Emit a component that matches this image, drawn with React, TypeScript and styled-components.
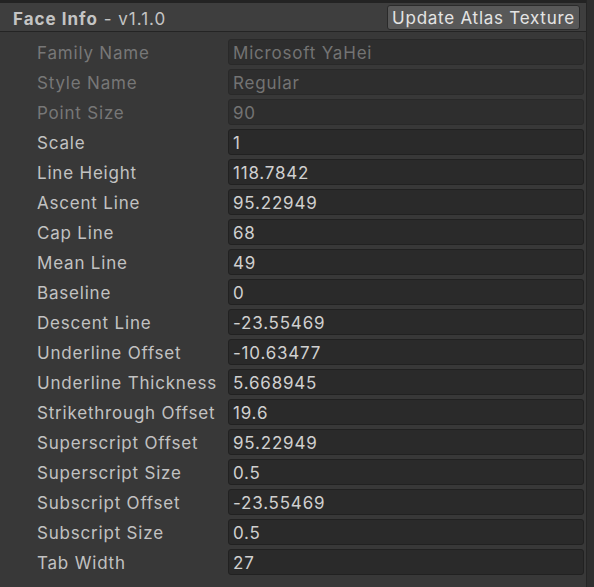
import React from "react";
import styled, { createGlobalStyle } from "styled-components";

const Global = createGlobalStyle`
  html, body { margin: 0; padding: 0; background: #383838; }
  body { font-family: Inter, "Noto Sans", sans-serif; }
`;

const Page = styled.div`
  width: 594px;
  height: 587px;
  display: flex;
  background: #383838;
  overflow: hidden;
`;

const Main = styled.div`
  width: 586px;
  display: flex;
  flex-direction: column;
`;

const Side = styled.div`
  width: 8px;
  border-left: 1px solid #252525;
  background: #2e2e2e;
  box-sizing: border-box;
`;

const TopStrip = styled.div`
  height: 3px;
  background: #232323;
`;

const Header = styled.div`
  height: 28px;
  background: #3e3e3e;
  border-bottom: 1px solid #242424;
  display: flex;
  align-items: center;
  justify-content: space-between;
  padding: 0 6px 0 13px;
`;

const Title = styled.div`
  font-size: 17px;
  color: #c4c4c4;
  letter-spacing: 1px;
  padding-top: 3px;
  b { font-weight: 700; letter-spacing: 1px; }
`;

const Button = styled.div`
  height: 25px;
  box-sizing: border-box;
  padding: 1px 4px 0;
  background: #585858;
  border: 1px solid #2a2a2a;
  border-radius: 3px;
  color: #e4e4e4;
  font-size: 17px;
  letter-spacing: 0.75px;
  display: flex;
  align-items: center;
`;

const Body = styled.div`
  padding: 5px 2px 0 37px;
  display: flex;
  flex-direction: column;
`;

const Row = styled.div`
  height: 30px;
  display: grid;
  grid-template-columns: 191px 1fr;
  align-items: center;
`;

const Label = styled.div<{ $disabled?: boolean }>`
  font-size: 17px;
  letter-spacing: 0.8px;
  padding-top: 2px;
  color: ${(p) => (p.$disabled ? "#777777" : "#c2c2c2")};
  white-space: nowrap;
`;

const Field = styled.div<{ $disabled?: boolean }>`
  height: 26px;
  box-sizing: border-box;
  border: 1px solid ${(p) => (p.$disabled ? "#292929" : "#212121")};
  background: ${(p) => (p.$disabled ? "#2e2e2e" : "#2a2a2a")};
  border-radius: 3px;
  padding: 2px 4px 0;
  display: flex;
  align-items: center;
  font-size: 17px;
  letter-spacing: 0.8px;
  color: ${(p) => (p.$disabled ? "#737373" : "#d0d0d0")};
  white-space: nowrap;
`;

const rows: [string, string, boolean?][] = [
  ["Family Name", "Microsoft YaHei", true],
  ["Style Name", "Regular", true],
  ["Point Size", "90", true],
  ["Scale", "1"],
  ["Line Height", "118.7842"],
  ["Ascent Line", "95.22949"],
  ["Cap Line", "68"],
  ["Mean Line", "49"],
  ["Baseline", "0"],
  ["Descent Line", "-23.55469"],
  ["Underline Offset", "-10.63477"],
  ["Underline Thickness", "5.668945"],
  ["Strikethrough Offset", "19.6"],
  ["Superscript Offset", "95.22949"],
  ["Superscript Size", "0.5"],
  ["Subscript Offset", "-23.55469"],
  ["Subscript Size", "0.5"],
  ["Tab Width", "27"],
];

export default function App() {
  return (
    <Page>
      <Global />
      <Main>
        <TopStrip />
        <Header>
          <Title>
            <b>Face Info</b> - v1.1.0
          </Title>
          <Button>Update Atlas Texture</Button>
        </Header>
        <Body>
          {rows.map(([l, v, d]) => (
            <Row key={l}>
              <Label $disabled={d}>{l}</Label>
              <Field $disabled={d}>{v}</Field>
            </Row>
          ))}
        </Body>
      </Main>
      <Side />
    </Page>
  );
}
